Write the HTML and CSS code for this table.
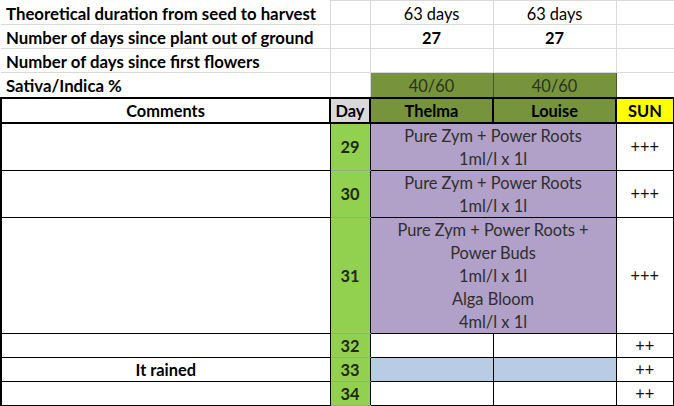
FILE: index.html
```html
<!DOCTYPE html>
<html>
<head>
<meta charset="utf-8">
<link rel="stylesheet" href="styles.css">
</head>
<body>
<table class="sheet">
  <colgroup>
    <col class="col-a"><col class="col-b"><col class="col-c"><col class="col-d"><col class="col-e">
  </colgroup>
  <tr class="row-top">
    <td class="label">Theoretical duration from seed to harvest</td>
    <td class="grid"></td>
    <td class="grid center">63 days</td>
    <td class="grid center">63 days</td>
    <td class="grid"></td>
  </tr>
  <tr class="row-top">
    <td class="label">Number of days since plant out of ground</td>
    <td class="grid"></td>
    <td class="grid center bold">27</td>
    <td class="grid center bold">27</td>
    <td class="grid"></td>
  </tr>
  <tr class="row-top">
    <td class="label">Number of days since first flowers</td>
    <td class="grid"></td>
    <td class="grid"></td>
    <td class="grid"></td>
    <td class="grid"></td>
  </tr>
  <tr class="row-ratio">
    <td class="label">Sativa/Indica %</td>
    <td class="grid"></td>
    <td class="olive center ratio">40/60</td>
    <td class="olive center ratio">40/60</td>
    <td class="grid"></td>
  </tr>
  <tr class="row-head">
    <td class="head">Comments</td>
    <td class="head day-head">Day</td>
    <td class="head olive">Thelma</td>
    <td class="head olive">Louise</td>
    <td class="head sun">SUN</td>
  </tr>
  <tr class="row-29">
    <td class="comment"></td>
    <td class="day">29</td>
    <td class="feed" colspan="2">Pure Zym + Power Roots<br>1ml/l x 1l</td>
    <td class="sunval">+++</td>
  </tr>
  <tr class="row-30">
    <td class="comment"></td>
    <td class="day">30</td>
    <td class="feed" colspan="2">Pure Zym + Power Roots<br>1ml/l x 1l</td>
    <td class="sunval">+++</td>
  </tr>
  <tr class="row-31">
    <td class="comment"></td>
    <td class="day">31</td>
    <td class="feed" colspan="2">Pure Zym + Power Roots +<br>Power Buds<br>1ml/l x 1l<br>Alga Bloom<br>4ml/l x 1l</td>
    <td class="sunval">+++</td>
  </tr>
  <tr class="row-1">
    <td class="comment"></td>
    <td class="day">32</td>
    <td class="plain"></td>
    <td class="plain"></td>
    <td class="sunval">++</td>
  </tr>
  <tr class="row-1">
    <td class="comment bold">It rained</td>
    <td class="day">33</td>
    <td class="plain rain"></td>
    <td class="plain rain"></td>
    <td class="sunval">++</td>
  </tr>
  <tr class="row-1">
    <td class="comment"></td>
    <td class="day">34</td>
    <td class="plain"></td>
    <td class="plain"></td>
    <td class="sunval">++</td>
  </tr>
</table>
</body>
</html>
```

FILE: styles.css
```css
html, body {
  margin: 0;
  padding: 0;
  background: #ffffff;
}

body {
  font-family: Lato, "Open Sans", "Liberation Sans", sans-serif;
  font-size: 16.4px;
  color: #000000;
}

.sheet {
  border-collapse: collapse;
  table-layout: fixed;
  width: 673px;
}

.col-a { width: 329px; }
.col-b { width: 40px; }
.col-c { width: 123px; }
.col-d { width: 123px; }
.col-e { width: 58px; }

.sheet td {
  padding: 0;
  line-height: 20px;
  white-space: nowrap;
  overflow: hidden;
}

.row-top { height: 24px; }
.row-ratio { height: 25px; }
.row-head { height: 25px; }
.row-29 { height: 48px; }
.row-30 { height: 47px; }
.row-31 { height: 116px; }
.row-1 { height: 24px; }

.row-top td, .row-ratio td { padding-top: 3px; }

.label {
  font-weight: 700;
  padding-left: 5px !important;
  border-bottom: 1px solid #d9d9d9;
  font-size: 16.8px;
}

.grid {
  border: 1px solid #d9d9d9;
}

.center { text-align: center; }
.bold { font-weight: 700; }

.olive {
  background: #77933c;
  border: 1px solid #4a5c26;
}

.ratio {
  color: #2b3318;
}

.head {
  border: 2px solid #000000;
  font-weight: 700;
  text-align: center;
  padding-top: 1px !important;
}

.day-head { background: #d9d9d9; }
.sun { background: #ffff00; }

.comment {
  border: 1px solid #000000;
  border-left: 2px solid #000000;
  text-align: center;
}

.day {
  background: #92d050;
  font-weight: 700;
  text-align: center;
  color: #1e2a10;
  border-top: 1px solid #9aa890;
  border-bottom: 1px solid #9aa890;
  border-left: 1px solid #000000;
  border-right: 1px solid #000000;
}

.feed {
  background: #b1a0c7;
  text-align: center;
  color: #2e2e2e;
  border: 1px solid #000000;
  line-height: 23px !important;
}

.plain {
  border: 1px solid #000000;
}

.rain { background: #b8cce4; }

.sunval {
  text-align: center;
  color: #111111;
  border: 1px solid #000000;
  border-right: 2px solid #000000;
}
```
